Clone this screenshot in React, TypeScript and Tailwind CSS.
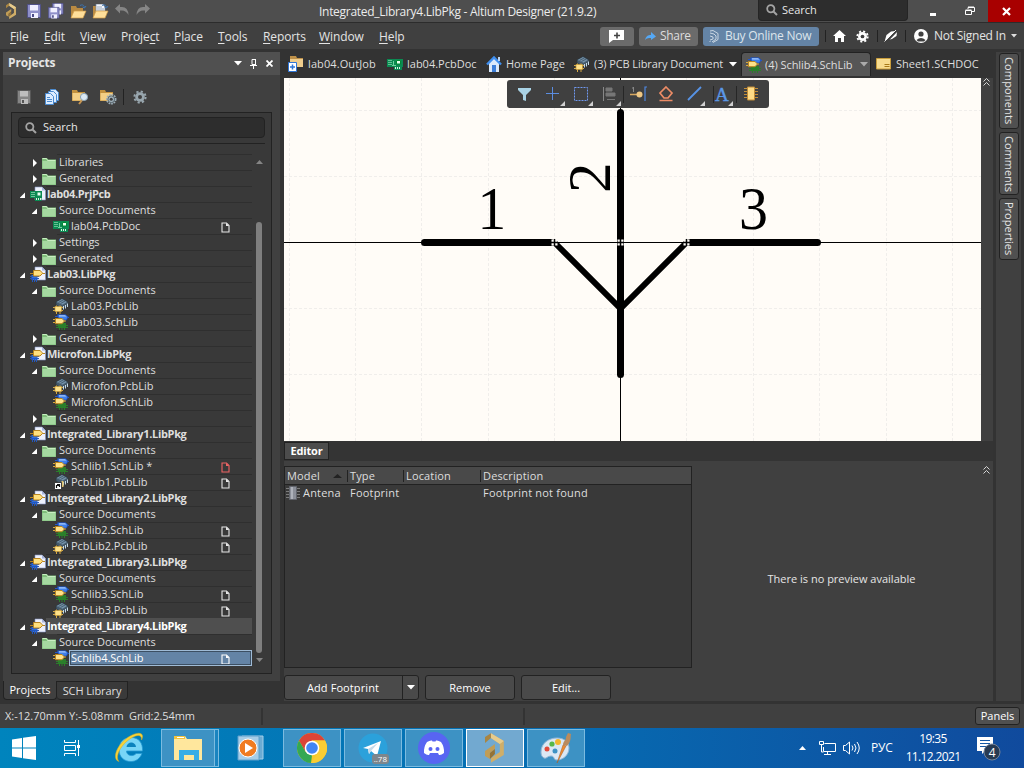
import React from "react";

type IconProps = { className?: string };

const SchLibIcon = ({ className = "" }: IconProps) => (
  <svg className={className} width="16" height="16" viewBox="0 0 16 16">
    <path d="M2 2.500h3M13 3.500h3" stroke="#2456c8" />
    <path d="M4.500.800h8l2.500 2-1.500 3.200H6z" fill="#3f7fe8" stroke="#1c4bb8" strokeWidth=".8" />
    <path d="M6 1.200h6l1.500 1.300H6z" fill="#a9ccff" />
    <path d="M5 9h8v5H5z" fill="#2b7f2b" />
    <path d="M3 11.500h12M3 13.500h12M6.500 14v2M9 14v2M11.500 14v2" stroke="#2b7f2b" />
    <path d="M0 5.500h3M0 8.500h3M11 7h2" stroke="#d6a83c" />
    <path d="M2.500 4.500h6.500l2.500 2.500-2.500 2.700H2.500z" fill="#ffe28a" stroke="#b98520" />
  </svg>
);

const PcbLibIcon = ({ className = "", shortcut = false }: IconProps & { shortcut?: boolean }) => (
  <svg className={className} width="16" height="16" viewBox="0 0 16 16">
    <path d="M3 4l6-3.500 6 3.500v3l-5 4-7-4z" fill="#45596a" stroke="#2a3640" strokeWidth=".7" />
    <path d="M3.500 4L9 1l5 3-4.500 2.800z" fill="#7391a8" />
    <path d="M5.500 4.500l5-2.700M7.500 5.500l5-2.700" stroke="#3d5161" strokeWidth=".8" />
    <path d="M10.500 8v3.500M12.500 7v3.500M14.500 5.500V9" stroke="#c5d8e4" />
    {shortcut ? (
      <>
        <path d="M8.500 7h2v6h-2z" fill="#e3c571" />
        <path d="M1.500 8.500h7v7h-7z" fill="#fff" stroke="#222" strokeWidth=".8" />
        <path d="M3.500 14v-2.500h3M4 10.500h2.500V13" fill="none" stroke="#111" strokeWidth="1.200" />
      </>
    ) : (
      <>
        <path d="M0 9.500h10M0 12.500h10M3.500 7.500V16M7 7.500V16" stroke="#d8aa45" />
        <path d="M2 8.500h6.500v5H2z" fill="#ffe28a" stroke="#c49a38" strokeWidth=".7" />
      </>
    )}
  </svg>
);

const PcbDocIcon = ({ className = "" }: IconProps) => (
  <svg className={className} width="16" height="16" viewBox="0 0 16 16">
    <path d="M0 3h16v8h-1v3H7v-3H0z" fill="#0b8a52" />
    <path d="M1.500 4.500h3M1.500 6.500h3M1.500 8.500h3" stroke="#bff3d4" strokeDasharray="1 1" />
    <path d="M6.500 5v4.500M5 9.500h4" stroke="#6fd39d" />
    <path d="M9.500 4.500h4v3.500h-4z" fill="#e8fff0" stroke="#083" />
    <path d="M8.500 11v2M10.500 11v2M12.500 11v2" stroke="#d6f6e2" />
  </svg>
);

const PrjPcbIcon = () => (
  <svg width="16" height="16" viewBox="0 0 16 16">
    <path d="M5 1h7l3.500 3.500V14H5z" fill="#edf1fc" stroke="#8795c4" strokeWidth=".6" />
    <path d="M12 1l3.500 3.500H12z" fill="#a9b5dc" />
    <path d="M0 5h12v7h-.500v3H5v-3H0z" fill="#0b8a52" />
    <path d="M1.500 6.500h3M1.500 8.500h3M1.500 10.500h3" stroke="#d5f9e4" strokeDasharray="1 1" />
    <path d="M7.500 6.500h3v3h-3z" fill="#e8fff0" />
    <path d="M6.500 12v2M8.500 12v2M10.500 12v2" stroke="#d6f6e2" />
  </svg>
);

const LibPkgIcon = () => (
  <svg width="16" height="16" viewBox="0 0 16 16">
    <path d="M5 1h7l3.500 3.500V14H5z" fill="#edf1fc" stroke="#8795c4" strokeWidth=".6" />
    <path d="M12 1l3.500 3.500H12z" fill="#a9b5dc" />
    <path d="M1.500 9h6v5h-6z" fill="#2f6fe0" />
    <path d="M0 10.500h9M0 12.500h9M2.500 13v3M4.500 13v3M6.500 13v3" stroke="#2357be" />
    <path d="M0 7.500h3M13 7.500h2" stroke="#b98520" />
    <path d="M3.500 4.500h6.500l2.800 2.700L10 10H3.500z" fill="#ffe07e" stroke="#b98520" />
  </svg>
);

const GreenFolder = () => (
  <svg width="14" height="12" viewBox="0 0 14 12">
    <path d="M0 1h5l1 1.500h8V12H0z" fill="#7fbd7a" />
    <path d="M.500 4h13v7.500H.500z" fill="#a5d8a0" />
    <path d="M.500 1.500h4l1 2h8" stroke="#c9edc2" fill="none" />
  </svg>
);

const PageIcon = ({ color = "#e8e8e8" }: { color?: string }) => (
  <svg width="9" height="11" viewBox="0 0 9 11">
    <path d="M1 1h4.500L8 3.500V10H1z" fill="none" stroke={color} strokeWidth="1.100" />
    <path d="M5 1v3h3z" fill={color} />
  </svg>
);

const Caret = ({ className = "", color = "#fff" }: IconProps & { color?: string }) => (
  <svg className={className} width="8" height="5" viewBox="0 0 8 5">
    <path d="M0 0h8L4 4.500z" fill={color} />
  </svg>
);

const Magnifier = ({ className = "" }: IconProps) => (
  <svg className={className} width="12" height="12" viewBox="0 0 12 12">
    <circle cx="4.800" cy="4.800" r="3.600" fill="none" stroke="#a3a3a3" strokeWidth="1.800" />
    <path d="M7.500 7.500l3.500 3.500" stroke="#a3a3a3" strokeWidth="2" />
  </svg>
);

const Floppy = ({ a = "#8f90c9", b = "#f0f0ff", d = "#4a4b86" }: { a?: string; b?: string; d?: string }) => (
  <g>
    <path d="M.500.500h13v13H.500z" fill={a} stroke={d} strokeWidth=".8" />
    <path d="M3 1h8v5.500H3z" fill={b} />
    <path d="M4 9h7v5H4z" fill={b} />
    <path d="M5 10h2v3H5z" fill={d} />
  </g>
);

const Gear = ({ size = 14, color = "#fff", hole = "#3f3f3f" }: { size?: number; color?: string; hole?: string }) => (
  <svg width={size} height={size} viewBox="0 0 14 14">
    <circle cx="7" cy="7" r="5.600" fill="none" stroke={color} strokeWidth="2" strokeDasharray="2.200 2.198" />
    <circle cx="7" cy="7" r="4.800" fill={color} />
    <circle cx="7" cy="7" r="2" fill={hole} />
  </svg>
);

const AltiumMark = ({ size = 18 }: { size?: number }) => (
  <svg width={size * 0.66} height={size} viewBox="0 0 20 30">
    <path d="M6 0l13 8v14L6 30v-5l9-6v-8L6 5z" fill="#d0ae68" />
    <path d="M6 0l13 8-4 3L6 5z" fill="#e6cb8c" />
    <path d="M0 4l6-4v5l-6 5z" fill="#a88543" />
    <path d="M0 18l10-7v5l-5 4v6l-5-3z" fill="#c19d56" />
    <path d="M5 20l5-4v5l-5 5z" fill="#957234" />
  </svg>
);

const YellowFolder = ({ children }: { children?: React.ReactNode }) => (
  <svg width="17" height="16" viewBox="0 0 17 16">
    <path d="M0 1h5l1 2h7v9H0z" fill="#c3923f" />
    <path d="M.500 4h12v7.500H.500z" fill="#f3cf85" />
    {children}
  </svg>
);

const OpenFolder = ({ doc = false }: { doc?: boolean }) => (
  <svg width="17" height="15" viewBox="0 0 17 15">
    <path d="M1 2h5l1 2h6v10H1z" fill="#b98a42" />
    {doc && <path d="M4 0h7l2 3v7H4zM5 3h5M5 5h7M5 7h7" fill="#f4f7fc" stroke="#71859f" strokeWidth=".7" />}
    <path d="M1 14l3-7h12l-3 7z" fill="#ffdf9a" stroke="#d39c45" strokeWidth=".7" />
    <path d="M10 1.500c3-1.500 4 0 4.500 2M12.500 3l2 1 1.500-2" fill="none" stroke="#3d74b0" />
  </svg>
);

function TitleBar() {
  return (
    <header className="flex h-[22px] shrink-0 items-center bg-[#4e4e4e]">
      <div className="flex w-[319px] items-center pl-[6px]">
        <span className="flex w-[21px]"><AltiumMark size={16} /></span>
        <span className="flex w-[21px]"><svg width="14" height="14" viewBox="0 0 14 14"><Floppy /></svg></span>
        <span className="flex w-[22px]">
          <svg width="16" height="16" viewBox="0 0 16 16">
            <g transform="translate(4 0) scale(.82)"><Floppy /></g>
            <g transform="translate(0 4) scale(.82)"><Floppy /></g>
          </svg>
        </span>
        <span className="flex w-[22px]"><OpenFolder /></span>
        <span className="flex w-[22px]"><OpenFolder doc /></span>
        <svg width="38" height="14" viewBox="0 0 38 14">
          <path d="M1 4.500L6 0v3h2q6 0 6.500 8Q12 6.500 8 6.500H6v3zM36 4.500L31 0v3h-2q-6 0-6.500 8 2.500-4.500 6.500-4.500h2v3z" fill="#858585" />
        </svg>
      </div>
      <div className="w-[439px] pt-[2px] text-[12px] tracking-[-0.29px] text-[#ececec]">Integrated_Library4.LibPkg - Altium Designer (21.9.2)</div>
      <div className="flex h-[21px] w-[150px] items-center gap-[4px] self-start rounded-b border border-t-0 border-[#252525] bg-[#2d2d2d] pl-[7px]">
        <Magnifier />
        <span className="text-[#e8e8e8]">Search</span>
      </div>
      <div className="ml-[22px] mt-[6px] h-[3px] w-[6px] bg-white" />
      <svg className="ml-[29px]" width="10" height="10" viewBox="0 0 10 10" fill="none" stroke="#fff">
        <path d="M3 3V1.500h6.500v4H7M3 1h6" />
        <path d="M.500 4.500h6v4h-6zM.500 4h6" />
      </svg>
      <div className="ml-auto flex h-full w-[36px] items-center justify-center bg-[#a80000]">
        <svg width="9" height="9" viewBox="0 0 9 9"><path d="M1 1l7 7M8 1L1 8" stroke="#fff" strokeWidth="2.200" /></svg>
      </div>
    </header>
  );
}

const menus: [string, string, string, string][] = [
  ["", "F", "ile", "w-[34px]"],
  ["", "E", "dit", "w-[36px]"],
  ["", "V", "iew", "w-[41px]"],
  ["Proje", "c", "t", "w-[53px]"],
  ["", "P", "lace", "w-[44px]"],
  ["", "T", "ools", "w-[45px]"],
  ["", "R", "eports", "w-[56px]"],
  ["", "W", "indow", "w-[60px]"],
  ["", "H", "elp", "w-[221px]"],
];

function MenuBar() {
  return (
    <nav className="flex h-[27px] shrink-0 items-center border-t border-[#2c2c2c] bg-[#404040] pl-[10px] text-[12px] text-[#e4e4e4]">
      {menus.map(([a, u, b, w]) => (
        <span key={u + b} className={`${w} shrink-0 pt-px tracking-[-0.1px]`}>
          {a}<span className="underline underline-offset-2">{u}</span>{b}
        </span>
      ))}
      <div className="flex h-[19px] w-[34px] shrink-0 items-center justify-center rounded-[3px] bg-[#6b6b6b]">
        <svg width="16" height="13" viewBox="0 0 16 13">
          <path d="M1 0h14v10H4L0 13V0z" fill="#fff" />
          <path d="M8 2.500v6M5 5.500h6" stroke="#444" strokeWidth="1.600" />
        </svg>
      </div>
      <div className="ml-[5px] flex h-[19px] w-[59px] shrink-0 items-center rounded-[3px] bg-[#6b6b6b] pl-[6px]">
        <svg width="11" height="9" viewBox="0 0 11 9"><path d="M0 8c1-4 3-5 6-5V0l5 4.500L6 8V6C4 6 2 6 0 8z" fill="#55a8f5" /></svg>
        <span className="ml-[4px] tracking-[-0.3px] text-[#dedede]">Share</span>
      </div>
      <div className="ml-[5px] flex h-[19px] w-[116px] shrink-0 items-center rounded-[3px] bg-[#6484a6] pl-[6px]">
        <svg width="10" height="13" viewBox="0 0 10 13" fill="none" stroke="#c9d6e2">
          <path d="M1 1l3-.500 5 3v6l-5 3M1 3l4 1 2 2v3l-4 3M1 6l3 1v2l-3 1M1 11v1" />
        </svg>
        <span className="ml-[6px] whitespace-nowrap tracking-[-0.25px] text-[#dce4ec]">Buy Online Now</span>
      </div>
      <i className="ml-[6px] h-3 w-px shrink-0 bg-[#222]" />
      <svg className="ml-[7px] shrink-0" width="13" height="12" viewBox="0 0 13 12"><path d="M6.500 0L13 6h-2v6H8V8H5v4H2V6H0z" fill="#fff" /></svg>
      <span className="ml-[10px] flex w-[13px] shrink-0"><Gear size={13} /></span>
      <i className="ml-[8px] h-3 w-px shrink-0 bg-[#222]" />
      <svg className="ml-[6px] shrink-0" width="14" height="12" viewBox="0 0 14 12">
        <path d="M1 10l1.500-5L7 1.500 12 1l1 1-.500 4L8 9l-5 1z" fill="#fff" />
        <path d="M2 12L13.500 0" stroke="#404040" strokeWidth="2.200" />
        <path d="M.500 11.500L12 0" stroke="#fff" strokeWidth=".9" />
      </svg>
      <i className="ml-[7px] h-3 w-px shrink-0 bg-[#222]" />
      <svg className="ml-[8px] shrink-0" width="14" height="14" viewBox="0 0 14 14">
        <circle cx="7" cy="7" r="7" fill="#fff" />
        <circle cx="7" cy="5" r="2.600" fill="#404040" />
        <path d="M2.500 11q4.500-4 9 0L10 12.500H4z" fill="#404040" />
      </svg>
      <span className="ml-[6px] w-[77px] whitespace-nowrap tracking-[-0.25px]">Not Signed In</span>
      <svg width="6" height="4" viewBox="0 0 6 4"><path d="M0 0h6L3 3.500z" fill="#ddd" /></svg>
    </nav>
  );
}

type Kind = "folder" | "prj" | "lib" | "sch" | "pcb" | "pcbs" | "doc";
type Row = { lv: 1 | 2 | 3; kind: Kind; text: string; open?: boolean; page?: string; sel?: "group" | "item" };

const F = (text: string, open = false): Row => ({ lv: 2, kind: "folder", text, open });
const P = (text: string, kind: Kind = "lib"): Row => ({ lv: 1, kind, text, open: true });
const W = "#e8e8e8";
const rows: Row[] = [
  F("Libraries"),
  F("Generated"),
  P("lab04.PrjPcb", "prj"),
  F("Source Documents", true),
  { lv: 3, kind: "doc", text: "lab04.PcbDoc", page: W },
  F("Settings"),
  F("Generated"),
  P("Lab03.LibPkg"),
  F("Source Documents", true),
  { lv: 3, kind: "pcb", text: "Lab03.PcbLib" },
  { lv: 3, kind: "sch", text: "Lab03.SchLib" },
  F("Generated"),
  P("Microfon.LibPkg"),
  F("Source Documents", true),
  { lv: 3, kind: "pcb", text: "Microfon.PcbLib" },
  { lv: 3, kind: "sch", text: "Microfon.SchLib" },
  F("Generated"),
  P("Integrated_Library1.LibPkg"),
  F("Source Documents", true),
  { lv: 3, kind: "sch", text: "Schlib1.SchLib *", page: "#f06464" },
  { lv: 3, kind: "pcbs", text: "PcbLib1.PcbLib", page: W },
  P("Integrated_Library2.LibPkg"),
  F("Source Documents", true),
  { lv: 3, kind: "sch", text: "Schlib2.SchLib", page: W },
  { lv: 3, kind: "pcb", text: "PcbLib2.PcbLib", page: W },
  P("Integrated_Library3.LibPkg"),
  F("Source Documents", true),
  { lv: 3, kind: "sch", text: "Schlib3.SchLib", page: W },
  { lv: 3, kind: "pcb", text: "PcbLib3.PcbLib", page: W },
  { ...P("Integrated_Library4.LibPkg"), sel: "group" },
  F("Source Documents", true),
  { lv: 3, kind: "sch", text: "Schlib4.SchLib", page: "#fff", sel: "item" },
];

const indent = { 1: "pl-[8px]", 2: "pl-[20px]", 3: "pl-[41px]" };

function TreeRow({ r }: { r: Row }) {
  const fill =
    r.sel === "group"
      ? "bg-[#4f4f4f] border-t border-[#4f4f4f] text-white pb-[2px]"
      : r.sel === "item"
        ? "bg-[#6484a6] border border-[#9fbbd6] outline outline-1 -outline-offset-2 outline-[#3c4f63] text-white"
        : "border-t border-[#2f2f2f] text-[#dedede] pb-[2px]";
  return (
    <div className={`flex h-4 w-[240px] items-center ${indent[r.lv]}`}>
      {r.lv < 3 && (
        <svg className="mt-[2px] shrink-0" width="7" height="8" viewBox="0 0 7 8">
          <path d={r.open ? "M5 1.500v5.500H-.500z" : "M1 0v8l4-4z"} fill="#fff" />
        </svg>
      )}
      <span className={`flex shrink-0 ${r.lv === 1 ? "ml-[3px] w-[16px]" : r.lv === 2 ? "ml-[3px] w-[15px] pt-[2px]" : "w-[16px]"}`}>
        {r.kind === "folder" && <GreenFolder />}
        {r.kind === "prj" && <PrjPcbIcon />}
        {r.kind === "lib" && <LibPkgIcon />}
        {r.kind === "sch" && <SchLibIcon />}
        {r.kind === "pcb" && <PcbLibIcon />}
        {r.kind === "pcbs" && <PcbLibIcon shortcut />}
        {r.kind === "doc" && <PcbDocIcon />}
      </span>
      <span className={`flex h-4 flex-1 items-center justify-between whitespace-nowrap leading-[14px] ${fill} ${r.lv === 1 ? "pl-px font-bold" : r.sel ? "pl-px" : "pl-[2px]"}`}>
        <span className={r.lv === 1 ? "tracking-[-0.33px]" : "tracking-[-0.03px]"}>{r.text}</span>
        {r.page && <span className={`mt-[3px] w-[9px] ${r.sel ? "mr-[21px]" : "mr-[22px]"}`}><PageIcon color={r.page} /></span>}
      </span>
    </div>
  );
}

function ProjectsPanel() {
  return (
    <aside className="flex w-[281px] shrink-0 flex-col pl-[3px] pt-[2px]">
      <div className="flex h-[23px] w-[277px] items-center bg-[#505050] pl-[5px] text-[12px] font-bold text-[#e6e6e6]">
        <span className="w-[226px] shrink-0 pb-px tracking-[-0.15px]">Projects</span>
        <Caret className="mr-[8px] shrink-0" />
        <svg className="mr-[8px] shrink-0" width="8" height="10" viewBox="0 0 8 10"><path d="M2 .500h3.500v5H2zM0 6.500h7M3.500 6v4M5.500 0v6" fill="none" stroke="#fff" /></svg>
        <svg className="shrink-0" width="7" height="7" viewBox="0 0 7 7"><path d="M.500.500l6 6M6.500.500l-6 6" stroke="#fff" strokeWidth="1.800" /></svg>
      </div>
      <div className="flex h-[606px] w-[277px] flex-col bg-[#404040] px-2">
        <div className="flex h-[37px] shrink-0 items-center pl-[6px] pt-[6px]">
          <span className="flex w-[28px]"><svg width="14" height="14" viewBox="0 0 14 14"><Floppy a="#858585" b="#bdbdbd" d="#555" /></svg></span>
          <span className="flex w-[27px]">
            <svg width="14" height="16" viewBox="0 0 14 16" fill="#dcecff" stroke="#4b8bd0">
              <path d="M5.500.500h5l3 3v8h-8z" /><path d="M3.500 2.500h5l3 3v8h-8z" /><path d="M.500 4.500h5l3 3v8h-8z" /><path d="M2 8.500h3M2 10.500h5M2 12.500h5" />
            </svg>
          </span>
          <span className="flex w-[28px]">
            <YellowFolder><path d="M11 10l-4 5" stroke="#c79653" strokeWidth="2" /><circle cx="12" cy="8" r="3.600" fill="#dbe9f4" stroke="#8aa2b5" /></YellowFolder>
          </span>
          <span className="flex w-[23px]">
            <YellowFolder><g transform="translate(6 5) scale(.75)"><circle cx="7" cy="7" r="5.500" fill="none" stroke="#9fb0ba" strokeWidth="3" strokeDasharray="2.200 1" /><circle cx="7" cy="7" r="4.500" fill="#9fb0ba" stroke="#4a555c" /><circle cx="7" cy="7" r="2" fill="#404040" /></g></YellowFolder>
          </span>
          <i className="mr-[9px] h-4 w-px bg-[#222]" />
          <Gear color="#98a6ae" hole="#404040" />
        </div>
        <div className="flex h-[562px] w-[261px] shrink-0 flex-col border border-[#222] bg-[#393939] pt-[4px]">
          <div className="ml-[6px] flex h-[21px] w-[247px] shrink-0 items-center rounded border border-[#222] bg-[#2d2d2d] pl-[6px]">
            <Magnifier /><span className="ml-[6px] pb-px text-[#e8e8e8]">Search</span>
          </div>
          <div className="ml-[6px] mt-[5px] h-px w-[247px] shrink-0 bg-[#222]" />
          <div className="mt-[11px] flex">
            <div className="-mt-px flex flex-col">{rows.map((r, i) => <TreeRow key={i} r={r} />)}</div>
            <div className="ml-[3px] flex h-[512px] w-[8px] flex-col items-center">
              <svg className="mt-[5px]" width="7" height="4" viewBox="0 0 7 4"><path d="M0 4h7L3.500 0z" fill="#858585" /></svg>
              <div className="mt-[58px] w-[6px] flex-1 rounded-full bg-[#7f7f7f]" />
              <svg className="mb-[5px] mt-[5px]" width="7" height="4" viewBox="0 0 7 4"><path d="M0 0h7L3.500 4z" fill="#858585" /></svg>
            </div>
          </div>
        </div>
      </div>
      <div className="flex h-[19px] items-stretch">
        <div className="flex w-[54px] items-center justify-center rounded-b-[4px] border border-t-0 border-[#222] bg-[#404040] text-white">Projects</div>
        <div className="flex w-[71px] items-center justify-center whitespace-nowrap rounded-b-[4px] border border-l-0 border-[#222] bg-[#3a3a3a] tracking-[-0.1px] text-[#dedede]">SCH Library</div>
      </div>
    </aside>
  );
}

function DocTabs() {
  return (
    <div className="flex h-[28px] shrink-0 items-center whitespace-nowrap pl-[4px] text-[#dedede]">
      <svg className="mr-[4px] shrink-0" width="16" height="16" viewBox="0 0 16 16">
        <path d="M2 0h6l1 2h6v9H2z" fill="#bd9049" /><path d="M2 3h13v8H2z" fill="#efcd8d" />
        <path d="M.500 6.500h8v9h-8z" fill="#fff" stroke="#2e75d6" /><path d="M2 11h5M4.500 8.500V13.500" stroke="#2e75d6" strokeWidth="1.500" />
      </svg>
      <span className="w-[79px] tracking-[0.1px]">lab04.OutJob</span>
      <PcbDocIcon className="mr-[4px] shrink-0" />
      <span className="w-[79px]">lab04.PcbDoc</span>
      <svg className="mr-[4px] shrink-0" width="16" height="16" viewBox="0 0 16 16">
        <path d="M3 7l5-5 5 5v9H3z" fill="#dbe9fb" /><path d="M6 9h4v7H6z" fill="#3d7ed8" />
        <path d="M1 8.500l7-7 7 7" fill="none" stroke="#3f8ff0" strokeWidth="2.400" /><path d="M12 1h2v4h-2z" fill="#bcd4f2" />
      </svg>
      <span className="w-[68px]">Home Page</span>
      <PcbLibIcon className="mr-[4px] shrink-0" />
      <span className="w-[135px] tracking-[-0.1px]">(3) PCB Library Document</span>
      <Caret className="shrink-0" />
      <div className="ml-[4px] flex h-[24px] w-[130px] shrink-0 items-center rounded-t border border-b-0 border-[#222] bg-[#565656] pl-[4px]">
        <SchLibIcon className="mr-[3px] shrink-0" />
        <span className="w-[95px] tracking-[-0.05px]">(4) Schlib4.SchLib</span>
        <Caret color="#aaa" className="shrink-0" />
      </div>
      <svg className="ml-[5px] shrink-0" width="15" height="12" viewBox="0 0 15 12">
        <path d="M.500.500h14v10.500H.500z" fill="#f7dc8f" stroke="#c99d3c" /><path d="M8.500 6.500h5M8.500 8.500h5" stroke="#a77918" />
      </svg>
      <span className="ml-[5px]">Sheet1.SCHDOC</span>
    </div>
  );
}

function Toolbar() {
  return (
    <svg className="absolute left-[223px] top-[2px]" width="262" height="28" viewBox="0 0 262 28">
      <rect width="262" height="28" rx="3" fill="#404040" />
      <path d="M11 8h13v2l-5 5v6l-3-1v-5l-5-5z" fill="#a9d3e6" />
      <path d="M45.500 7v13M39 13.500h13" stroke="#5b8de0" />
      <rect x="67.500" y="7.500" width="13" height="13" fill="none" stroke="#7099f0" strokeDasharray="2 1" />
      <path d="M96.500 7v14" stroke="#888" /><path d="M99 8h6v3h-6zM99 13h9v3h-9zM100 19.500h8" fill="#777" stroke="#777" />
      <path d="M116.500 6v17M206.500 6v17" stroke="#262626" transform="translate(0 0)" />
      <path d="M123 14.500h9" stroke="#d8a861" strokeWidth="1.500" /><circle cx="132.500" cy="14.500" r="3" fill="#f0c884" /><path d="M138 21V7h2" fill="none" stroke="#4f87e0" strokeWidth="1.200" /><path d="M126.500 7v5M125 8h1.500" stroke="#888" />
      <path d="M159 7l6 6-4 5h-4l-4-5zM152.500 20.500h13" fill="none" stroke="#ed8c66" strokeWidth="1.700" />
      <path d="M181 20L194 7" stroke="#5793e6" strokeWidth="1.800" />
      <text x="208" y="21" fontFamily="Liberation Serif, serif" fontSize="19" stroke="#5b98e8" strokeWidth=".4" fill="#5b98e8">A</text>
      <path d="M229.500 6v17" stroke="#262626" />
      <path d="M237 8.500h14M237 11.500h14M237 14.500h14M237 17.500h14" stroke="#c28d38" /><path d="M240.500 7h7v13h-7z" fill="#ffdc87" stroke="#c28d38" />
      <path d="M58 21v5h-5zM86 21v5h-5zM114 21v5h-5zM198 21v5h-5zM226 21v5h-5z" fill="#d0d0d0" />
    </svg>
  );
}

function Canvas() {
  const vs = [289.5, 355.5, 421.5, 488.5, 554.5, 686.5, 753.5, 819.5, 886.5, 952.5];
  const hs = [110.5, 176.5, 308.5, 374.5];
  return (
    <div className="relative h-[363px] w-[697px] shrink-0">
      <svg className="block" width="697" height="363" viewBox="284 78 697 363">
        <rect x="284" y="78" width="697" height="363" fill="#fffcf7" />
        <g stroke="#f0eeeb" strokeDasharray="3 2">
          {vs.map((x) => <path key={x} d={`M${x} 78v363`} />)}
          {hs.map((y) => <path key={y} d={`M284 ${y}h697`} />)}
        </g>
        <path d="M284 242.500h697M620.500 78v363" stroke="#000" />
        <g stroke="#000" strokeWidth="7" strokeLinecap="round">
          <path d="M424.500 242.500H551M690 242.500h127.500M620.500 112.500V374.500" />
          <path d="M556 244l64.500 64.500L685 244" fill="none" strokeWidth="6" />
        </g>
        {[554.5, 620.5, 686.5].map((x) => (
          <g key={x}>
            <rect x={x - 3} y="239.500" width="6" height="6" fill="#fffcf7" />
            <path d={`M${x - 3.5} 242.500h7M${x} 239v7`} stroke="#000" strokeWidth="1.500" />
          </g>
        ))}
        <g fontFamily="Liberation Serif, serif" fontSize="61">
          <text transform="translate(477.500 229) scale(.94 1)">1</text>
          <text transform="translate(739 229) scale(.95 1)">3</text>
          <text transform="translate(610 193) rotate(-90)">2</text>
        </g>
      </svg>
      <Toolbar />
    </div>
  );
}

const Chevrons = ({ className = "" }: IconProps) => (
  <svg className={className} width="7" height="8" viewBox="0 0 7 8"><path d="M.500 3.500l3-3 3 3M.500 7.500l3-3 3 3" fill="none" stroke="#d6d6d6" /></svg>
);

function Editor() {
  const btn = "flex h-[25px] items-center justify-center rounded-[3px] border border-[#222] bg-[#4a4a4a] text-white";
  return (
    <section className="flex w-[709px] flex-col">
      <div className="flex h-[20px] items-start bg-[#343434]">
        <div className="mt-px flex h-[18px] w-[45px] items-center justify-center border border-[#222] bg-[#4c4c4c] font-bold tracking-[-0.2px] text-white">Editor</div>
      </div>
      <div className="flex h-[240px] bg-[#404040] pt-[5px]">
        <div className="w-[408px]">
          <div className="flex h-[202px] flex-col border border-[#222] bg-[#393939] text-[#dedede]">
            <div className="flex h-[18px] shrink-0 items-center border-b border-[#222] bg-[#494949] pl-[2px] tracking-[0.15px]">
              <span className="w-[46px]">Model</span>
              <svg className="mr-[5px]" width="9" height="4" viewBox="0 0 9 4"><path d="M0 4h9L4.500 0z" fill="#222" /></svg>
              <span className="flex h-[12px] w-[56px] items-center border-l border-[#222] pl-[2px]">Type</span>
              <span className="flex h-[12px] w-[77px] items-center border-l border-[#222] pl-[2px]">Location</span>
              <span className="flex h-[12px] items-center border-l border-[#222] pl-[2px]">Description</span>
            </div>
            <div className="flex h-4 items-center pl-px tracking-[0.2px]">
              <svg width="14" height="14" viewBox="0 0 14 14"><path d="M0 2.500h14M0 5.500h14M0 8.500h14M0 11.500h14" stroke="#7b7b7b" /><path d="M3.500.500h7v13h-7z" fill="#8b8f99" stroke="#62656d" /><path d="M5 1h2v12H5z" fill="#aeb2bb" /></svg>
              <span className="ml-[3px] w-[47px]">Antena</span>
              <span className="w-[133px]">Footprint</span>
              <span>Footprint not found</span>
            </div>
          </div>
          <div className="flex pt-[7px]">
            <div className={`${btn} w-[135px]`}>
              <span className="flex-1 pr-px text-center tracking-[0.1px]">Add Footprint</span>
              <span className="flex h-full w-[16px] items-center justify-center border-l border-[#222]"><Caret /></span>
            </div>
            <div className={`${btn} ml-[6px] w-[90px]`}>Remove</div>
            <div className={`${btn} ml-[6px] w-[90px]`}>Edit...</div>
          </div>
        </div>
        <div className="flex w-[289px] justify-center pt-[106px] text-[#e6e6e6]"><span className="pl-[10px]">There is no preview available</span></div>
        <Chevrons className="ml-[2px]" />
      </div>
    </section>
  );
}

function SideTabs() {
  const t = "flex w-[20px] items-center justify-center rounded-[3px] border border-[#222] bg-[#505050] text-[#e4e4e4] [writing-mode:vertical-rl] text-[11px]";
  return (
    <div className="ml-[3px] mt-[2px] flex h-[649px] w-[25px] flex-col items-center gap-[3px] bg-[#404040] pt-px">
      <div className={`${t} h-[76px] tracking-[0.15px]`}>Components</div>
      <div className={`${t} h-[63px]`}>Comments</div>
      <div className={`${t} h-[62px]`}>Properties</div>
    </div>
  );
}

function Taskbar() {
  const app = "flex h-[38px] w-[58px] shrink-0 items-center justify-center border border-[#7bbbe0] bg-[#3d92c4] mr-[3px]";
  return (
    <footer className="flex h-[40px] shrink-0 items-center bg-gradient-to-r from-[#0084bd] via-[#066bb1] via-[56%] to-[#104a9d]">
      <svg className="ml-[12px]" width="24" height="24" viewBox="0 0 24 24" fill="#fff"><path d="M0 3.500l10-1.500v9.500H0zM11 1.800L24 0v11.500H11zM0 12.500h10V22L0 20.500zM11 12.500h13V24l-13-1.800z" /></svg>
      <svg className="ml-[28px]" width="17" height="16" viewBox="0 0 17 16" fill="none" stroke="#fff"><path d="M.500 0v2.500h11V0M.500 16v-2.500h11V16M.500 5.500h11v5H.500zM14.500 0v16" /><path d="M13 5h3v3h-3z" fill="#fff" stroke="none" /></svg>
      <svg className="ml-[33px]" width="30" height="32" viewBox="0 0 30 32">
        <path d="M28 21.500c-2 5-6 8-11 8C10 29.500 5 25 5 17.500S10 5.500 17 5.500c7.500 0 12 5 11.500 13.500H12.500c0 5 7 6 9.500 2.500z" fill="#78d6f7" stroke="#269bd4" strokeWidth=".8" />
        <path d="M12.500 15c.500-6 9-6 9.500 0z" fill="#0c83bd" />
        <path d="M5 29.500C-1 28 1 18 8 10.500 15 3 25-1 28 2.500c1 1.500.500 3.500-.500 5.500.500-4-2-5.500-6-4C14 6.500 6 15 4 22c-1 3.500-.500 6 1 7.500z" fill="#f6d33a" stroke="#d9ac1c" strokeWidth=".5" />
      </svg>
      <div className="ml-[17px] flex h-[38px] w-[54px] items-center justify-center border border-[#7bbbe0] bg-[#3d92c4]">
        <svg width="30" height="26" viewBox="0 0 30 26"><path d="M1 1h11l2 3h15v21H1z" fill="#ffe79d" /><path d="M1 1h11v3H1z" fill="#f2c43e" /><path d="M4 2h7v1H4z" fill="#fff" /><path d="M6 15h20v10h-5v-5H11v5H6z" fill="#39aee6" /></svg>
      </div>
      <i className="h-[38px] w-[4px] border border-l-0 border-[#7bbbe0] bg-[#1a84c0]" />
      <svg className="ml-[18px]" width="27" height="26" viewBox="0 0 27 26">
        <path d="M5 1h21v23H5z" fill="#6babd3" stroke="#a3cfea" /><path d="M1 1h21v24H1z" fill="#a7cde8" stroke="#5fa0cc" /><circle cx="11" cy="13" r="9" fill="#f07b21" stroke="#fff" /><path d="M8 8l8 5-8 5z" fill="#fff" />
      </svg>
      <div className={`${app} ml-[19px]`}>
        <svg width="30" height="30" viewBox="0 0 30 30">
          <circle cx="15" cy="15" r="15" fill="#f6c92c" />
          <path d="M2 7.500A15 15 0 0 1 28 7.500H15L8.500 18.700z" fill="#db4437" />
          <path d="M2 7.500L8.500 18.700 15 22.500 14 30A15 15 0 0 1 2 7.500z" fill="#34a853" />
          <path d="M21.500 18.700L14 30a15 15 0 0 0 14-22.500H15z" fill="#f9cd34" />
          <circle cx="15" cy="15" r="7.300" fill="#fff" /><circle cx="15" cy="15" r="5.800" fill="#4285f4" />
        </svg>
      </div>
      <div className={`${app} relative`}>
        <svg width="30" height="30" viewBox="0 0 30 30"><circle cx="15" cy="15" r="14.500" fill="#2ba1db" /><path d="M5 15L23 8l-4 15-6-5-2 3-1-5z" fill="#fff" /><path d="M10 16l10-6-7 8-2 3z" fill="#c6daea" /></svg>
        <span className="absolute bottom-[2px] right-[12px] rounded-[3px] bg-[#7e868c] px-[2px] text-[8px] leading-[10px] text-white">..78</span>
      </div>
      <div className={app}>
        <svg width="32" height="32" viewBox="0 0 32 32"><circle cx="16" cy="16" r="16" fill="#5865f2" /><path d="M9 10q3-2 5-1.500l.500 1h3l.500-1q2-.5 5 1.500 3.500 5 3 11-3 2.500-5 2l-1-2h-8l-1 2q-2 .5-5-2-.5-6 3-11z" fill="#fff" /><circle cx="12.500" cy="17" r="2" fill="#5865f2" /><circle cx="19.500" cy="17" r="2" fill="#5865f2" /></svg>
      </div>
      <div className="mr-[3px] flex h-[38px] w-[58px] shrink-0 items-center justify-center border border-white bg-[#72a9d0]"><AltiumMark size={30} /></div>
      <div className={app}>
        <svg width="32" height="32" viewBox="0 0 32 32">
          <path d="M1 20C1 11 9 6 17 6c8 0 12 5 12 10 0 7-6 12-12 12-4 0-2-4-6-4-4 0-4 3-7 2-2-1-3-3-3-6z" fill="#dbe8f4" stroke="#94b7d5" />
          <circle cx="15" cy="19" r="2.500" fill="#3d92c4" /><circle cx="7" cy="17" r="2.500" fill="#e24b3b" /><circle cx="12" cy="12" r="2.600" fill="#56b848" /><circle cx="18" cy="10" r="3" fill="#f3b62e" />
          <path d="M17 31l6-18 3 1z" fill="#ed8b32" stroke="#a85f22" strokeWidth=".5" /><path d="M23 13c0-4 3-4 3-8l2-4 3 1c-1 4 1 6-4 12z" fill="#ba8b5d" />
        </svg>
      </div>
      <div className="ml-auto flex items-center text-white">
        <svg width="7" height="4" viewBox="0 0 7 4"><path d="M0 4h7L3.500 0z" fill="#fff" /></svg>
        <svg className="ml-[13px]" width="17" height="15" viewBox="0 0 17 15" fill="none" stroke="#fff"><path d="M5.500 2.500h11v8h-12V6M8.500 10.500v3M5 13.500h7" /><path d="M.500.500h4v3h-4zM2.500 4v7h2" /></svg>
        <svg className="ml-[7px]" width="18" height="14" viewBox="0 0 18 14" fill="none" stroke="#fff"><path d="M.500 4.500h2L6.500 1v12l-4-3.500h-2zM9 4.500q2 2.500 0 5M11.500 3q3 4 0 8M14 1q4.500 6 0 12" /></svg>
        <span className="ml-[10px] w-[36px] text-[12px] tracking-[-0.2px]">РУС</span>
        <div className="flex w-[52px] flex-col items-center whitespace-nowrap text-[12px] leading-[18px] tracking-[-0.65px]"><span>19:35</span><span>11.12.2021</span></div>
        <svg className="ml-[17px] mr-[23px]" width="25" height="25" viewBox="0 0 25 25"><path d="M1 1h16v14H9l-3 3v-3H1z" fill="#fff" /><path d="M4 4.500h10M4 7.500h10M4 10.500h7" stroke="#1659a5" /><circle cx="16" cy="16" r="8" fill="#273a52" stroke="#758499" /><text x="12.800" y="20.500" fontSize="12" fontFamily="Open Sans, sans-serif" fill="#fff">4</text></svg>
      </div>
    </footer>
  );
}

export default function App() {
  return (
    <div className="flex h-[768px] w-[1024px] flex-col overflow-hidden bg-[#333] font-['Open_Sans','Noto_Sans',sans-serif] text-[11px] leading-[14px]">
      <TitleBar />
      <MenuBar />
      <div className="flex h-[654px] shrink-0 pt-px">
        <ProjectsPanel />
        <main className="ml-[3px] flex w-[709px] shrink-0 flex-col">
          <DocTabs />
          <div className="flex bg-[#404040]"><Canvas /><Chevrons className="ml-[2px]" /></div>
          <Editor />
        </main>
        <SideTabs />
      </div>
      <div className="mt-px flex h-[24px] shrink-0 items-center bg-[#404040] pl-[5px] pr-[4px] text-[#dedede]">
        <span className="w-[124px]">X:-12.70mm Y:-5.08mm</span>
        <span className="w-[132px] tracking-[-0.1px]">Grid:2.54mm</span>
        <i className="h-[17px] w-[2px] bg-[#333]" />
        <i className="ml-[260px] h-[17px] w-[2px] bg-[#333]" />
        <div className="ml-auto flex h-[18px] w-[45px] items-center justify-center rounded-[3px] border border-[#222] bg-[#505050] text-white">Panels</div>
      </div>
      <Taskbar />
    </div>
  );
}
